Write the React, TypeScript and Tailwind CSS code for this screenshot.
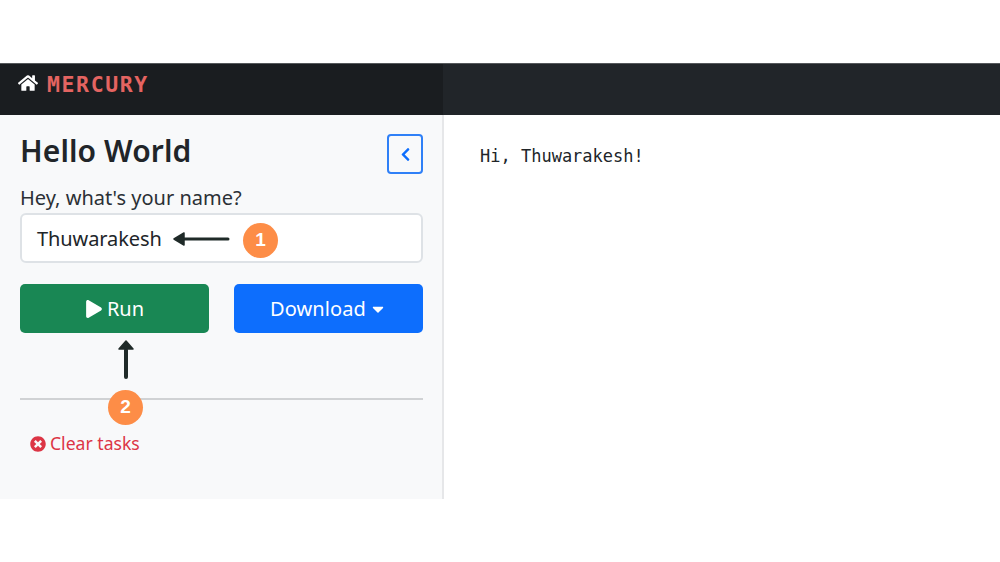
import { FaHome, FaPlay, FaTimesCircle, FaChevronLeft, FaCaretDown } from "react-icons/fa"

function Badge({ n, className }: { n: number; className: string }) {
  return (
    <span className={`absolute flex h-[35px] w-[35px] items-center justify-center rounded-full bg-[#fd8d47] text-[19px] font-bold text-white [font-family:'Liberation_Sans',sans-serif] ${className}`}>
      {n}
    </span>
  )
}

export default function App() {
  return (
    <div className="h-[562px] w-[1000px] overflow-hidden bg-white pt-[63px] [font-family:'Noto_Sans',sans-serif] text-[#212529]">
      <nav className="flex h-[52px] border-t border-[#55585b]">
        <div className="flex w-[443px] items-start gap-[9px] bg-[#1a1d20] pl-[18px] pt-[7px]">
          <FaHome className="mt-[2px] text-[20px] text-white" />
          <span className="mt-[1px] text-[21.5px] leading-[26px] font-bold tracking-[1.6px] text-[#e46461] [font-family:'DejaVu_Sans_Mono',monospace]">MERCURY</span>
        </div>
        <div className="flex-1 bg-[#212529]" />
      </nav>
      <div className="flex h-[384px]">
        <aside className="relative w-[444px] border-r-2 border-[#e6e7e9] bg-[#f8f9fa] pl-5 pr-[19px]">
          <div className="flex items-start justify-between pt-[18px]">
            <h1 className="text-[30px] leading-[36px] font-semibold tracking-[0.1px]">Hello World</h1>
            <button className="mt-[1px] flex h-10 w-[36px] items-center justify-center rounded-[4px] border-2 border-[#2f80f7] text-[#0d6efd]">
              <FaChevronLeft className="text-[15px]" />
            </button>
          </div>
          <label className="mt-[9px] block text-[20px] leading-[30px] text-[#2b3035]">Hey, what's your name?</label>
          <div className="flex h-[50px] w-[403px] items-center rounded-[6px] border-2 border-[#dee2e6] bg-white pb-0 pl-[15px] pt-[1px] text-[20px] tracking-[-0.1px]">Thuwarakesh</div>
          <div className="mt-[21px] flex w-[403px] justify-between">
            <button className="flex h-[49px] w-[189px] items-center justify-center gap-[4px] rounded-[5px] bg-[#198754] text-[20px] text-white">
              <FaPlay className="text-[18px]" />
              Run
            </button>
            <button className="flex h-[49px] w-[189px] items-center justify-center gap-[3px] rounded-[5px] bg-[#0d6efd] text-[20px] tracking-[0.1px] text-white">
              Download
              <FaCaretDown className="text-[18px]" />
            </button>
          </div>
          <hr className="mt-[65px] w-[403px] border-t-2 border-[#d0d2d4]" />
          <div className="mt-[30px] ml-[10px] flex items-center gap-[4px] text-[17.6px] leading-[27px] text-[#dc3545]">
            <FaTimesCircle className="text-[16px]" />
            Clear tasks
          </div>

          {/* annotations */}
          <svg className="absolute left-[170px] top-[114px] h-[20px] w-[62px]" viewBox="0 0 62 20">
            <path d="M58 10H14" stroke="#1f2a28" strokeWidth="3" strokeLinecap="round" />
            <path d="M4 10L14 4V16Z" fill="#1f2a28" stroke="#1f2a28" strokeWidth="1.5" strokeLinejoin="round" />
          </svg>
          <Badge n={1} className="left-[243px] top-[108px]" />
          <svg className="absolute left-[116px] top-[223px] h-[44px] w-[20px]" viewBox="0 0 20 44">
            <path d="M10 39V12" stroke="#1f2a28" strokeWidth="4" strokeLinecap="round" />
            <path d="M10 3L3 11H17Z" fill="#1f2a28" stroke="#1f2a28" strokeWidth="1.5" strokeLinejoin="round" />
          </svg>
          <Badge n={2} className="left-[108px] top-[275px]" />
        </aside>
        <main className="flex-1 pl-[36px] pt-[31px] text-[17px] leading-[20px] text-[#212529] [font-family:'DejaVu_Sans_Mono',monospace]">
          Hi, Thuwarakesh!
        </main>
      </div>
    </div>
  )
}
